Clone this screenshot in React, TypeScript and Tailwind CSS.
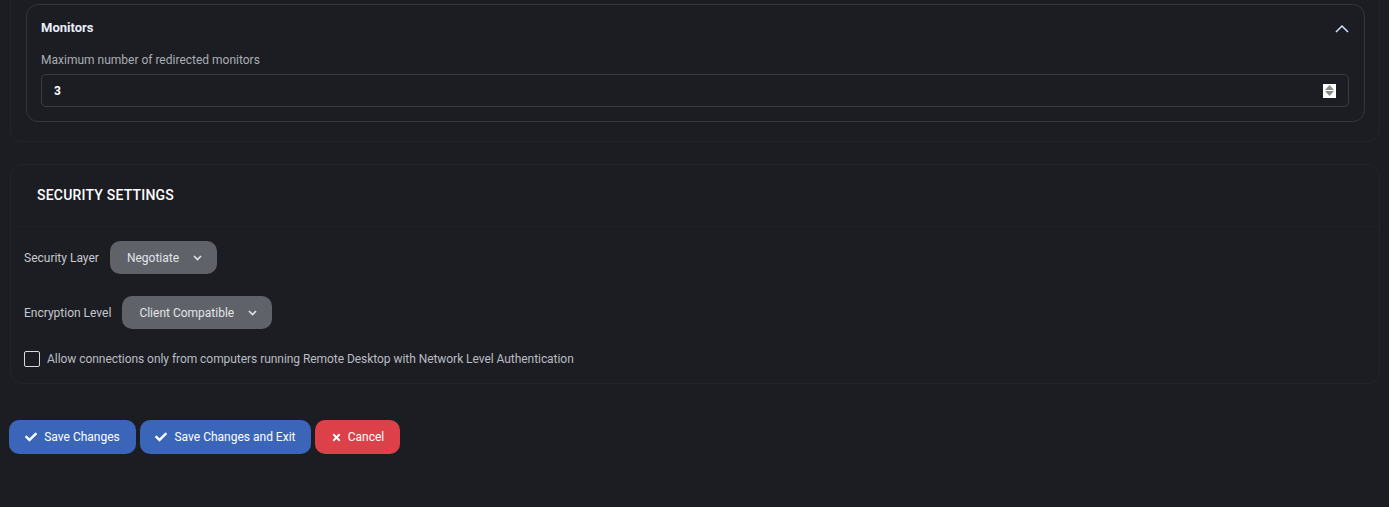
import { FaCheck, FaTimes } from 'react-icons/fa';

function ChevronUp() {
  return (
    <svg width="14" height="9" viewBox="0 0 14 9" fill="none" className="text-[#d6e2fb]">
      <path d="M1 8L7 2L13 8" stroke="currentColor" strokeWidth="1.5" />
    </svg>
  );
}

function ChevronDown() {
  return (
    <svg width="9" height="6" viewBox="0 0 9 6" fill="none" className="text-[#e2e4e8]">
      <path d="M1 1L4.5 4.5L8 1" stroke="currentColor" strokeWidth="1.6" />
    </svg>
  );
}

function Spinner() {
  return (
    <div className="flex h-[14px] w-[13px] flex-col items-center justify-center gap-[1px] bg-white">
      <svg width="9" height="5" viewBox="0 0 9 5">
        <path d="M4.5 0L9 5H0Z" fill="#8c8c8c" />
      </svg>
      <svg width="9" height="5" viewBox="0 0 9 5">
        <path d="M0 0H9L4.5 5Z" fill="#8c8c8c" />
      </svg>
    </div>
  );
}

function Select({ value }: { value: string }) {
  return (
    <div className="flex h-[33px] items-center gap-[14px] rounded-[10px] bg-[#5f6268] pl-[17px] pr-[15px] text-[12px] text-[#e2e4e8]">
      <span>{value}</span>
      <ChevronDown />
    </div>
  );
}

export default function App() {
  return (
    <div
      className="h-[507px] w-full overflow-hidden bg-[#1c1d22]"
      style={{ fontFamily: 'Roboto, "Liberation Sans", sans-serif' }}
    >
      {/* Display card (top cut off) */}
      <div className="-mt-[12px] ml-[10px] mr-[9px] rounded-b-[12px] border border-[#232429] pl-[15px] pr-[14px] pt-[15px] pb-[19px]">
        <div className="rounded-[12px] border border-[#35363b] pl-[14px] pr-[15px] pt-[15px] pb-[14px]">
          <div className="flex h-[16px] items-center justify-between">
            <h3 className="text-[13px] font-bold text-[#e9eefb]">Monitors</h3>
            <ChevronUp />
          </div>
          <label className="mt-[16px] block text-[12px] leading-[16px] text-[#a9adb4]">
            Maximum number of redirected monitors
          </label>
          <div className="mt-[6px] flex h-[33px] items-center justify-between rounded-[5px] border border-[#3a3b40] pl-[12px] pr-[12px]">
            <span className="text-[12px] font-bold text-white">3</span>
            <Spinner />
          </div>
        </div>
      </div>

      {/* Security settings */}
      <div className="ml-[10px] mr-[9px] mt-[22px] rounded-[12px] border border-[#232429] pb-[15px]">
        <div className="flex h-[62px] items-center border-b border-[#1f2025] pl-[26px]">
          <h2 className="text-[14px] font-medium tracking-[0.2px] text-white">SECURITY SETTINGS</h2>
        </div>
        <div className="flex flex-col px-[13px] pt-[14px]">
          <div className="flex items-center gap-[11px]">
            <span className="text-[12px] text-[#c6c9cf]">Security Layer</span>
            <Select value="Negotiate" />
          </div>
          <div className="mt-[22px] flex items-center gap-[11px]">
            <span className="text-[12px] text-[#c6c9cf]">Encryption Level</span>
            <Select value="Client Compatible" />
          </div>
          <label className="mt-[21px] flex items-center gap-[7px]">
            <span className="h-[16px] w-[16px] rounded-[2px] border border-[#d7d9de]" />
            <span className="text-[12px] tracking-[-0.05px] text-[#b9bcc3]">
              Allow connections only from computers running Remote Desktop with Network Level Authentication
            </span>
          </label>
        </div>
      </div>

      {/* Actions */}
      <div className="mt-[36px] flex gap-[4px] pl-[9px]">
        <button className="flex h-[34px] w-[127px] items-center justify-center gap-[7px] rounded-[10px] bg-[#3b65b9] text-[12px] text-white">
          <FaCheck className="h-[12px] w-[12px]" />
          Save Changes
        </button>
        <button className="flex h-[34px] w-[171px] items-center justify-center gap-[7px] rounded-[10px] bg-[#3b65b9] text-[12px] text-white">
          <FaCheck className="h-[12px] w-[12px]" />
          Save Changes and Exit
        </button>
        <button className="flex h-[34px] w-[85px] items-center justify-center gap-[6px] rounded-[10px] bg-[#dc4149] text-[12px] text-white">
          <FaTimes className="h-[11px] w-[11px]" />
          Cancel
        </button>
      </div>
    </div>
  );
}
